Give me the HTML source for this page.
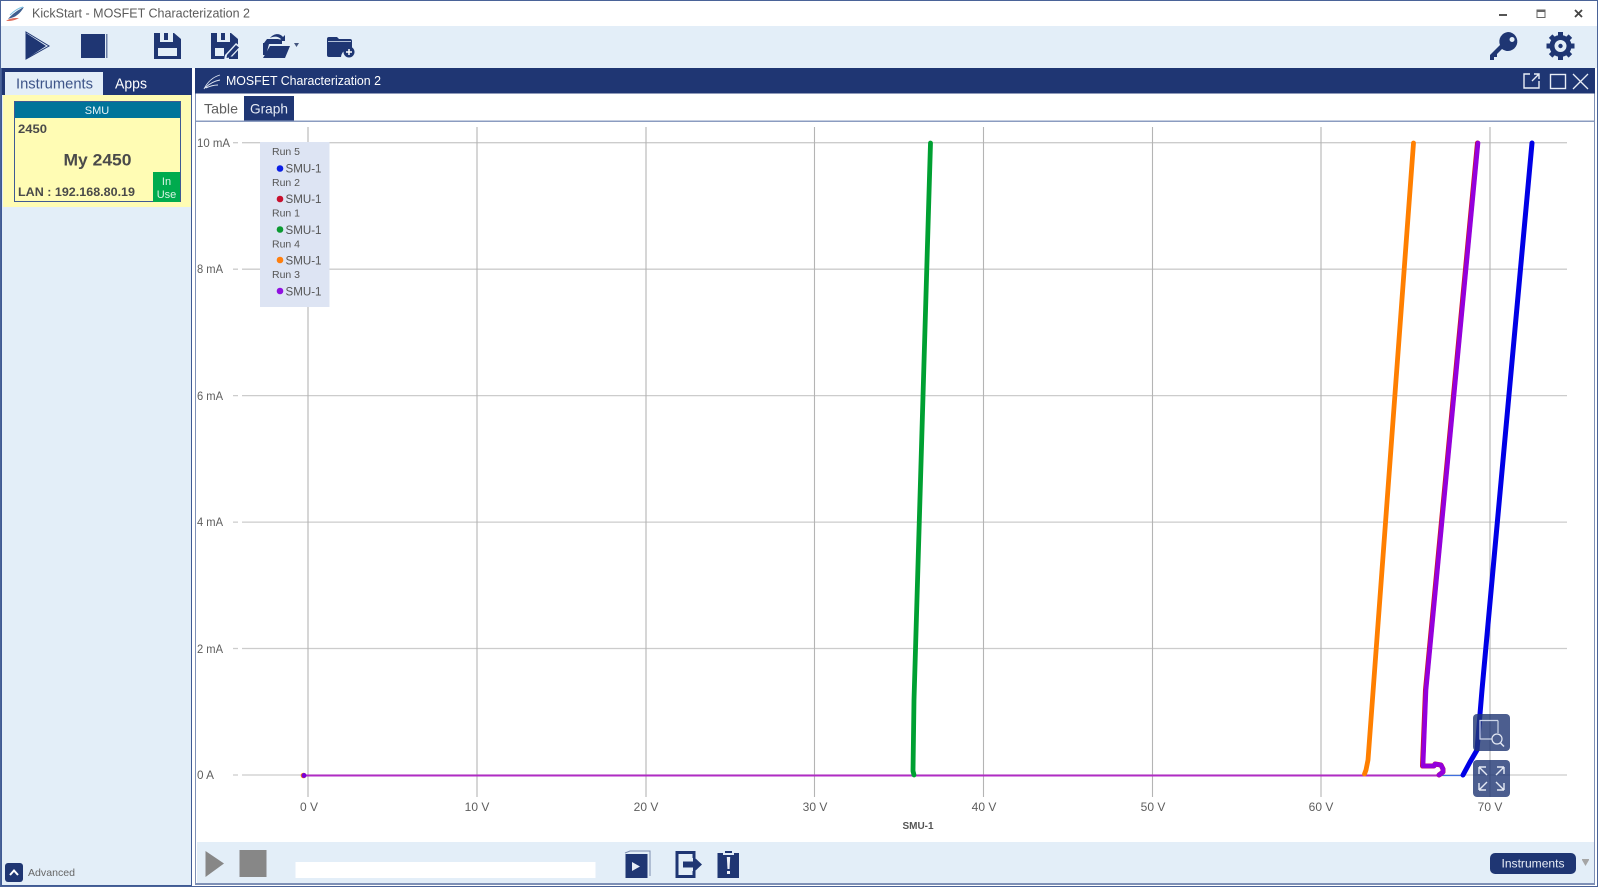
<!DOCTYPE html>
<html><head><meta charset="utf-8"><title>KickStart - MOSFET Characterization 2</title>
<style>
html,body{margin:0;padding:0;background:#fff;width:1598px;height:887px;overflow:hidden}
svg{display:block;filter:blur(0.35px)}
text{font-family:"Liberation Sans",sans-serif}
</style></head><body>
<svg width="1598" height="887" viewBox="0 0 1598 887" xmlns="http://www.w3.org/2000/svg">
<rect width="1598" height="887" fill="#fff"/>
<!-- toolbar -->
<rect x="0" y="26" width="1598" height="42" fill="#e3eef8"/>
<!-- outer frame -->
<rect x="0.5" y="0.5" width="1597" height="886" fill="none" stroke="#4a6398"/>
<!-- title logo -->
<path d="M8 19C12 14 18 10 24 7C21 12 18 15 14 17Z" fill="#3f5f8f"/>
<path d="M6 21C10 18 14 18 19 18C14 21 10 21 6 21Z" fill="#e0705f"/>
<path d="M10 15C14 11 18 8 23 7" fill="none" stroke="#7cc4e4" stroke-width="1"/>
<text x="32" y="17.5" font-size="13" fill="#5a5a5a" textLength="218" lengthAdjust="spacingAndGlyphs">KickStart - MOSFET Characterization 2</text>
<!-- window controls -->
<rect x="1499" y="14" width="8" height="2" fill="#555"/>
<rect x="1537" y="10" width="8" height="7.5" fill="none" stroke="#666" stroke-width="1"/><rect x="1537" y="9.5" width="8" height="2.5" fill="#666"/>
<path d="M1575 10L1582 17M1582 10L1575 17" stroke="#444" stroke-width="1.8"/>

<!-- toolbar icons -->
<g fill="#1f3673">
<path d="M26 32L49 46L26 59Z" fill="none" stroke="#1f3673" stroke-width="1"/>
<path d="M26 33V59L46 46Z"/>
<rect x="81" y="34" width="24" height="24"/><rect x="106" y="34" width="1.500" height="24" fill="#6d80a8"/>
<path fill-rule="evenodd" d="M154 33H174L181 39V59H154ZM160 33V42H173V33H168V40H164V33ZM158 48V56H177V48Z"/>
<path fill-rule="evenodd" d="M211 33H231L238 39V59H211ZM217 33V42H230V33H225V40H221V33ZM215 48V56H224V48Z"/>
</g>
<path d="M236 43L225 55L224 60L230 59L241 47Z" fill="#e3eef8"/>
<path d="M236 45L227 55L226.500 58L229.500 57.500L239 47.500Z" fill="#1f3673"/>
<rect x="229" y="56.500" width="9" height="2.500" fill="#1f3673"/>
<g fill="#1f3673">
<path d="M263 43H264L267 39H278L282 40V44H269L266 55L263 55Z"/>
<path d="M270 46H290L285 58H263Z"/>
<path d="M270 38C274 33 280 33 283 37L285 35V41H279L281 39C278 36 274 36 270 38Z"/>
<path d="M294 43H299L296.500 47Z" fill="#44557f"/>
<path d="M329 37H337L339 39H350Q352 39 352 41V50A8 8 0 0 0 341 57H329Q327 57 327 55V39Q327 37 329 37Z"/>
<circle cx="349" cy="52" r="5.500"/>
</g>
<path d="M328 41.500H351" stroke="#e3eef8" stroke-width="0.700"/>
<path d="M346 52H352M349 49V55" stroke="#fff" stroke-width="1.500"/>
<g fill="#1f3673">
<path fill-rule="evenodd" d="M1508 32A9.500 9.500 0 1 1 1502 49L1497 54V57H1494V60H1490V55L1500 45A9.500 9.500 0 0 1 1508 32ZM1512 37A2.500 2.500 0 1 0 1512.100 37Z"/>
</g>
<g transform="translate(1560.500 46)">
<circle r="8.500" fill="none" stroke="#1f3673" stroke-width="5"/>
<circle r="2.200" fill="#1f3673"/>
<g fill="#1f3673"><rect x="-2.500" y="-14" width="5" height="5"/><rect x="-2.500" y="9" width="5" height="5"/><rect x="-14" y="-2.500" width="5" height="5"/><rect x="9" y="-2.500" width="5" height="5"/>
<rect x="-2.500" y="-14" width="5" height="5" transform="rotate(45)"/><rect x="-2.500" y="9" width="5" height="5" transform="rotate(45)"/><rect x="-14" y="-2.500" width="5" height="5" transform="rotate(45)"/><rect x="9" y="-2.500" width="5" height="5" transform="rotate(45)"/></g>
</g>

<!-- left panel -->
<rect x="2" y="68" width="190" height="818" fill="#e3eef8"/>
<rect x="1.500" y="68.500" width="190" height="817" fill="none" stroke="#3f5a94"/>
<rect x="2" y="68" width="190" height="27" fill="#1f3673"/>
<rect x="5" y="72" width="98" height="23" fill="#e3eef8"/>
<text x="16" y="88.500" font-size="14.500" fill="#3d5489" textLength="77" lengthAdjust="spacingAndGlyphs">Instruments</text>
<text x="115" y="88.500" font-size="14.500" fill="#fff" textLength="32" lengthAdjust="spacingAndGlyphs">Apps</text>
<rect x="3" y="95" width="188" height="112" fill="#fffcb4"/>
<rect x="14.500" y="101.500" width="166" height="100" fill="#fffcb4" stroke="#3f5a94"/>
<rect x="15" y="102" width="165" height="16" fill="#00749a"/>
<text x="97" y="114" font-size="11" fill="#e8f4f8" text-anchor="middle">SMU</text>
<text x="18" y="133" font-size="12" font-weight="bold" fill="#4a4a4a" textLength="29" lengthAdjust="spacingAndGlyphs">2450</text>
<text x="97.500" y="165.500" font-size="17" font-weight="bold" fill="#4a4a4a" text-anchor="middle" textLength="68" lengthAdjust="spacingAndGlyphs">My 2450</text>
<text x="18" y="196" font-size="12" font-weight="bold" fill="#4a4a4a" textLength="117" lengthAdjust="spacingAndGlyphs">LAN : 192.168.80.19</text>
<rect x="153" y="172" width="27" height="30" fill="#00ab4e"/>
<text x="166.500" y="185" font-size="11" fill="#d9f3e4" text-anchor="middle">In</text>
<text x="166.500" y="198" font-size="11" fill="#d9f3e4" text-anchor="middle">Use</text>
<rect x="5" y="863" width="18" height="19" rx="3" fill="#1f3673"/>
<path d="M10 875L14 870.500L18 875" fill="none" stroke="#fff" stroke-width="2"/>
<text x="28" y="876" font-size="10.500" fill="#666" textLength="47" lengthAdjust="spacingAndGlyphs">Advanced</text>

<!-- right panel -->
<rect x="195.500" y="68.500" width="1399" height="816" fill="#fff" stroke="#7e90b6"/>
<rect x="195" y="68" width="1400" height="25.500" fill="#1f3673"/>
<g fill="none" stroke="#dfe6f2" stroke-width="0.900">
<path d="M204 89C208 81 213 77 220 75M205 88C209 84 214 81 220 80M206 88C210 86 214 85 218 85"/>
</g>
<text x="226" y="85" font-size="12.500" fill="#fff" textLength="155" lengthAdjust="spacingAndGlyphs">MOSFET Characterization 2</text>
<path d="M1530 74H1524V88H1539V81M1532 81L1539 74M1534 74H1539V79" fill="none" stroke="#e8edf6" stroke-width="1.400"/>
<rect x="1550.500" y="74.500" width="15" height="14" fill="none" stroke="#e8edf6" stroke-width="1.400"/>
<path d="M1573 74L1588 89M1588 74L1573 89" stroke="#e8edf6" stroke-width="1.300"/>
<text x="204" y="113.500" font-size="14" fill="#5f5f5f" textLength="34" lengthAdjust="spacingAndGlyphs">Table</text>
<rect x="244" y="96" width="50" height="25" fill="#1f3673"/>
<text x="250" y="113.500" font-size="14" fill="#e6ebf5" textLength="38" lengthAdjust="spacingAndGlyphs">Graph</text>
<rect x="196" y="120.500" width="1398" height="1.500" fill="#8b9cc0"/>

<!-- grid -->
<g stroke="#cccccc" stroke-width="1.300">
<path d="M242 142.700H1567M242 269.200H1567M242 395.600H1567M242 522.100H1567M242 648.500H1567M242 775H1567"/>
<path d="M233 142.700H238M233 269.200H238M233 395.600H238M233 522.100H238M233 648.500H238M233 775H238"/>
</g>
<g stroke="#b4b4b4" stroke-width="1.100">
<path d="M308 127V797M477 127V797M646 127V797M814.500 127V797M983.500 127V797M1152.500 127V797M1321 127V797M1490 127V797"/>
</g>
<g font-size="12" fill="#5e5e5e">
<text x="197" y="147" textLength="33" lengthAdjust="spacingAndGlyphs">10 mA</text>
<text x="197" y="273" textLength="26" lengthAdjust="spacingAndGlyphs">8 mA</text>
<text x="197" y="400" textLength="26" lengthAdjust="spacingAndGlyphs">6 mA</text>
<text x="197" y="526" textLength="26" lengthAdjust="spacingAndGlyphs">4 mA</text>
<text x="197" y="653" textLength="26" lengthAdjust="spacingAndGlyphs">2 mA</text>
<text x="197" y="779" textLength="17" lengthAdjust="spacingAndGlyphs">0 A</text>
</g>
<g font-size="12" fill="#5e5e5e" text-anchor="middle">
<text x="309" y="811">0 V</text><text x="477" y="811">10 V</text><text x="646" y="811">20 V</text><text x="815" y="811">30 V</text><text x="984" y="811">40 V</text><text x="1153" y="811">50 V</text><text x="1321" y="811">60 V</text><text x="1490" y="811">70 V</text>
</g>
<text x="918" y="829" font-size="10" font-weight="bold" fill="#555" text-anchor="middle">SMU-1</text>

<!-- traces -->
<g fill="none" stroke-linecap="round" stroke-linejoin="round">
<path d="M304 775.500H1464" stroke="#3f6fe0" stroke-width="1.200"/>
<path d="M304 775.500H1441" stroke="#b02cc4" stroke-width="2"/>
<path d="M914 775L913 771L914 700L930.500 143" stroke="#00a032" stroke-width="4.800"/>
<path d="M1364.500 774L1366 770L1368 760L1413.500 143" stroke="#ff7f00" stroke-width="4.800"/>
<path d="M1477.500 143L1425.500 690L1422.500 766H1434L1435 764L1441 765L1443 769L1443 772L1439 775" stroke="#c81428" stroke-width="5"/>
<path d="M1478 143L1426 690L1423 766H1434L1435 764L1441 765L1443 769L1443 772L1439 775" stroke="#9400dc" stroke-width="4.600"/>
<path d="M1532 143L1482 690L1477 750L1470 762L1463 775" stroke="#0000e6" stroke-width="5"/>
</g>
<circle cx="303.500" cy="775.500" r="2.800" fill="#ff8000"/>
<circle cx="304" cy="775.500" r="2.500" fill="#7a00d8"/>

<!-- legend -->
<rect x="260" y="142" width="69.500" height="165" fill="#dde4f3"/>
<g font-size="10.500" fill="#555">
<text x="272" y="155">Run 5</text><text x="272" y="186">Run 2</text><text x="272" y="216.500">Run 1</text><text x="272" y="247.500">Run 4</text><text x="272" y="278">Run 3</text>
</g>
<g font-size="12" fill="#555">
<text x="285.500" y="172.500" textLength="36" lengthAdjust="spacingAndGlyphs">SMU-1</text><text x="285.500" y="203" textLength="36" lengthAdjust="spacingAndGlyphs">SMU-1</text><text x="285.500" y="234" textLength="36" lengthAdjust="spacingAndGlyphs">SMU-1</text><text x="285.500" y="264.500" textLength="36" lengthAdjust="spacingAndGlyphs">SMU-1</text><text x="285.500" y="295.500" textLength="36" lengthAdjust="spacingAndGlyphs">SMU-1</text>
</g>
<circle cx="280" cy="168.500" r="3.300" fill="#0a1ee6"/><circle cx="280" cy="199" r="3.300" fill="#c8102e"/><circle cx="280" cy="229.500" r="3.300" fill="#0c9a32"/><circle cx="280" cy="260" r="3.300" fill="#ff7f0e"/><circle cx="280" cy="291" r="3.300" fill="#9010e0"/>

<!-- zoom buttons -->
<rect x="1473" y="714" width="37" height="37" rx="4" fill="#1f3673" fill-opacity="0.8"/>
<rect x="1473" y="760" width="37" height="37" rx="4" fill="#1f3673" fill-opacity="0.8"/>
<path d="M1498 720.500H1480V739H1492" fill="none" stroke="#cdd6e8" stroke-width="1.200"/><path d="M1498 720.500V733" fill="none" stroke="#cdd6e8" stroke-width="1.200"/>
<circle cx="1497" cy="739" r="5" fill="none" stroke="#e4e9f4" stroke-width="1.200"/><path d="M1500.500 743L1504 746.500" stroke="#e4e9f4" stroke-width="1.500"/>
<g fill="none" stroke="#e4e9f4" stroke-width="1.400">
<path d="M1479 767V774M1479 767H1486M1479 767L1487 775"/>
<path d="M1504 767V774M1504 767H1497M1504 767L1496 775"/>
<path d="M1479 790V783M1479 790H1486M1479 790L1487 782"/>
<path d="M1504 790V783M1504 790H1497M1504 790L1496 782"/>
</g>

<!-- bottom bar -->
<rect x="197" y="842" width="1397" height="41" fill="#e3eef8"/>
<rect x="196" y="883" width="1398" height="1.500" fill="#7e90b6"/>
<path d="M205.500 851L224 863.500L205.500 877Z" fill="#878787"/>
<rect x="239.500" y="850" width="27" height="27" fill="#878787"/>
<rect x="295.500" y="862" width="300" height="16" fill="#fff"/>
<path d="M625 853L630 851H650V876" fill="none" stroke="#7d8db0" stroke-width="1"/>
<rect x="625.500" y="854" width="22" height="24" fill="#1f3673"/>
<path d="M632 862L640 866.500L632 871Z" fill="#e8edf6"/>
<path d="M694 858V852.500H677V876.500H694V871" fill="none" stroke="#1f3673" stroke-width="3"/>
<path d="M683 861.500H693V856L702 864.500L693 873V867.500H683Z" fill="#1f3673"/>
<rect x="717.500" y="853" width="21.500" height="25" fill="#1f3673"/>
<rect x="723" y="852" width="11" height="3" fill="#e3eef8"/>
<rect x="725" y="851" width="7" height="2" fill="#1f3673"/>
<path d="M726.800 857H730.200L729.500 869H727.500Z" fill="#eef1f8"/><rect x="727" y="871" width="3" height="3" fill="#eef1f8"/>
<rect x="1490" y="853" width="86" height="21" rx="5" fill="#1f3673"/>
<text x="1533" y="867.500" font-size="12" fill="#e8edf6" text-anchor="middle" textLength="63" lengthAdjust="spacingAndGlyphs">Instruments</text>
<path d="M1582 860H1589L1585.500 866Z" fill="#a5a5a5"/>
<rect x="1582" y="859" width="7" height="1" fill="#a5a5a5"/>
</svg>
</body></html>
